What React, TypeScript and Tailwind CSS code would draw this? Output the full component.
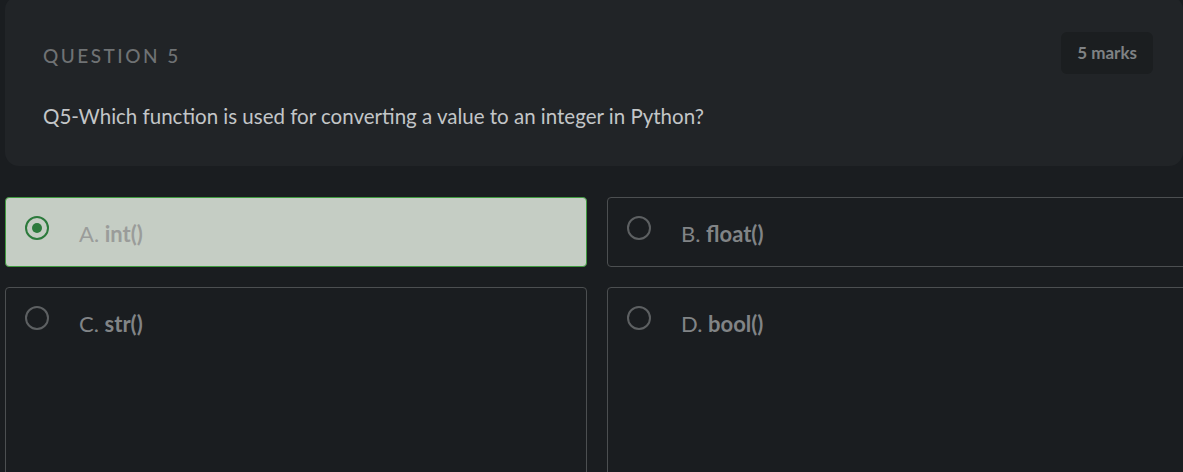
const options = [
  { key: "A", label: "int()", selected: true },
  { key: "B", label: "float()", selected: false },
  { key: "C", label: "str()", selected: false },
  { key: "D", label: "bool()", selected: false },
];

const Radio = ({ checked }: { checked: boolean }) => (
  <svg width="26" height="26" viewBox="0 0 26 26" className="shrink-0">
    <circle
      cx="13"
      cy="13"
      r="11"
      fill="none"
      stroke={checked ? "#2c7a3c" : "#5d6062"}
      strokeWidth="2"
    />
    {checked && <circle cx="13" cy="13" r="5" fill="#2c7a3c" />}
  </svg>
);

const App = () => {
  return (
    <div
      className="h-[472px] w-full overflow-hidden bg-[#1a1d20]"
      style={{ fontFamily: "Lato, 'Open Sans', sans-serif" }}
    >
      <div className="w-[1189px] pl-[5px]">
        <div className="-mt-[4px] flex w-[1178px] items-start justify-between rounded-[14px] bg-[#212427] pb-[37px] pl-[38px] pr-[30px] pt-[36px]">
          <div className="flex flex-col">
            <h2 className="pt-[11px] text-[19px] font-medium leading-[26px] tracking-[2.5px] text-[#6f7274]">
              QUESTION 5
            </h2>
            <p className="mt-[34px] text-[20.5px] leading-[26px] text-[#c3c6c8]">
              Q5-Which function is used for converting a value to an integer in
              Python?
            </p>
          </div>
          <span className="rounded-[6px] bg-[#1b1e20] px-[16px] py-[10px] text-[17px] font-bold leading-[22px] text-[#7f8284]">
            5 marks
          </span>
        </div>

        <div className="mt-[31px] grid grid-cols-2 grid-rows-[70px_200px] gap-x-[20px] gap-y-[20px]">
          {options.map((opt) => (
            <div
              key={opt.key}
              className={
                opt.selected
                  ? "flex items-start gap-[29px] rounded-[4px] border border-[#3f9a3f] bg-[#c5cdc4] pl-[18px] pt-[17px]"
                  : "flex items-start gap-[29px] rounded-[4px] border border-[#4c4f51] bg-[#1a1d20] pl-[18px] pt-[17px]"
              }
            >
              <Radio checked={opt.selected} />
              <span
                className={
                  opt.selected
                    ? "pt-[6px] text-[22px] leading-[26px] text-[#9a9c9a]"
                    : "pt-[6px] text-[22px] leading-[26px] text-[#818486]"
                }
              >
                {opt.key}. <span className="font-bold">{opt.label}</span>
              </span>
            </div>
          ))}
        </div>
      </div>
    </div>
  );
};

export default App;
